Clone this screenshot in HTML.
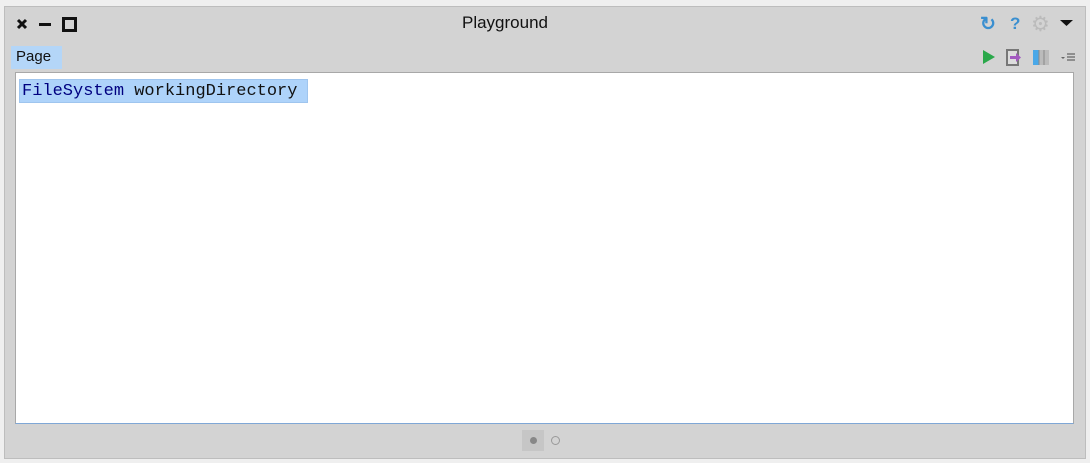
<!DOCTYPE html><html><head><style>
body{margin:0;width:1090px;height:463px;background:#efefef;position:relative;overflow:hidden;font-family:"Liberation Sans",sans-serif}
.win{position:absolute;left:4px;top:6px;width:1080px;height:451px;background:#d3d3d3;border:1px solid #bdbdbd}
.abs{position:absolute}
</style></head><body>
<div class="win"></div>
<svg class="abs" style="left:14px;top:16px" width="70" height="18">
<path d="M4 4 L12 12 M12 4 L4 12" stroke="#111" stroke-width="3"/>
<rect x="25" y="7" width="12" height="3" fill="#111"/>
<rect x="49.5" y="2.5" width="12" height="12" fill="none" stroke="#111" stroke-width="3"/>
</svg>
<div class="abs" style="left:0;width:1010px;top:13px;text-align:center;font-size:17px;color:#111">Playground</div>
<div class="abs" style="left:980px;top:13px;font-size:19px;font-weight:bold;color:#3a8fd0">↻</div>
<div class="abs" style="left:1010px;top:14px;font-size:17px;font-weight:bold;color:#3a8fd0">?</div>
<div class="abs" style="left:1031px;top:12px;font-size:21px;color:#bbb">⚙</div>
<svg class="abs" style="left:1060px;top:20px" width="14" height="8"><path d="M0 0H13L6.5 6Z" fill="#111"/></svg>
<div class="abs" style="left:11px;top:46px;width:51px;height:23px;background:#b4d6f8;font-size:15px;color:#111;line-height:22px;text-indent:5px">Page</div>
<svg class="abs" style="left:980px;top:48px" width="100" height="20">
<path d="M3 2 L15 9 L3 16Z" fill="#2aa84a"/>
<rect x="27" y="2" width="11" height="15" fill="#ddd" stroke="#777" stroke-width="2"/>
<path d="M30 8h6v-3l5 4.5-5 4.5v-3h-6z" fill="#a35ac0"/>
<rect x="53" y="2" width="16" height="15" fill="#bbb"/>
<rect x="53" y="2" width="6" height="15" fill="#4aa8e8"/>
<path d="M59 2v15M64 2v15" stroke="#888"/>
<path d="M81 9h4l-2 2z" fill="#666"/><path d="M87 6h8M87 9h8M87 12h8" stroke="#666" stroke-width="1.3"/>
</svg>
<div class="abs" style="left:15px;top:72px;width:1057px;height:350px;background:#fff;border:1px solid #a8a8a8;border-bottom-color:#7fa7d6"></div>
<div class="abs" style="left:19px;top:79px;width:289px;height:24px;background:#aed3fa;border:1px solid #9fc5ee;box-sizing:border-box"></div>
<div class="abs" style="left:22px;top:82px;font-family:'Liberation Mono',monospace;font-size:17px;color:#111"><span style="color:#000080">FileSystem</span> workingDirectory</div>
<div class="abs" style="left:522px;top:430px;width:22px;height:21px;background:#c6c6c6"></div>
<div class="abs" style="left:530px;top:437px;width:7px;height:7px;border-radius:50%;background:#888"></div>
<div class="abs" style="left:551px;top:436px;width:7px;height:7px;border-radius:50%;border:1px solid #999"></div>
</body></html>
